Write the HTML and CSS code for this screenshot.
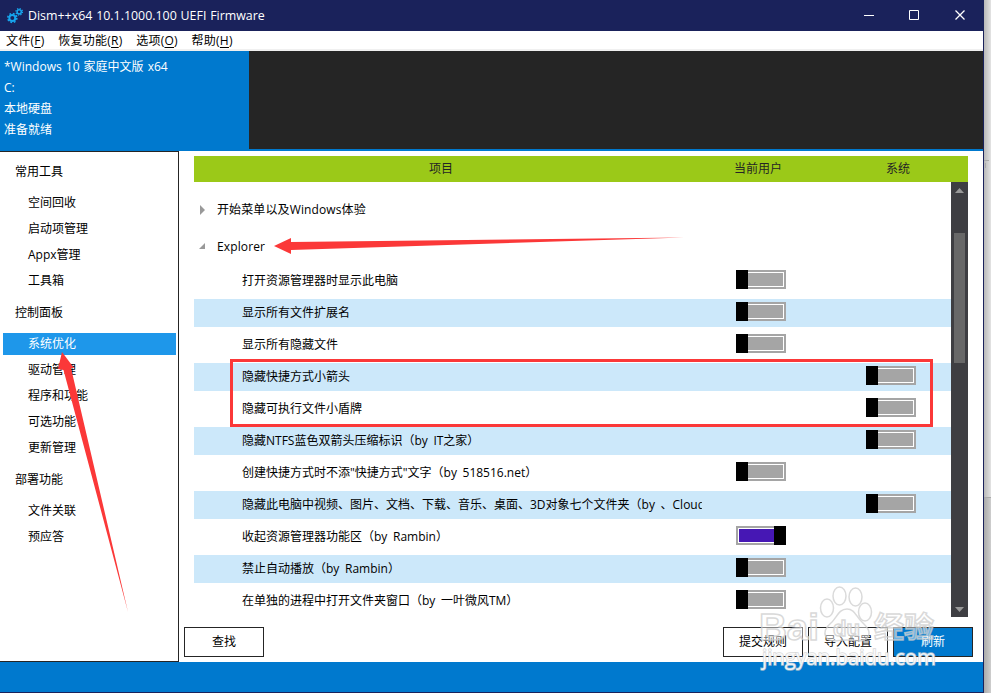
FILE: index.html
```
<!DOCTYPE html>
<html lang="zh-CN">
<head>
  <meta charset="UTF-8">
  <title>Dism++</title>
  <link rel="stylesheet" href="styles.css">
</head>
<body>
  <div class="window">
    <header class="titlebar">
      <svg class="logo" width="18" height="18" viewBox="0 0 18 18" fill="none" stroke="#16a5ee">
        <circle cx="6.300" cy="11" r="3" stroke-width="2"/>
        <circle cx="6.300" cy="11" r="4.500" stroke-width="1.600" stroke-dasharray="1.767 1.767"/>
        <circle cx="13.200" cy="4.800" r="2.100" stroke-width="1.500"/>
        <circle cx="13.200" cy="4.800" r="3.300" stroke-width="1.200" stroke-dasharray="1.296 1.296"/>
      </svg>
      <span class="title">Dism++x64 10.1.1000.100 UEFI Firmware</span>
      <svg class="controls" width="120" height="31" viewBox="0 0 120 31" fill="none" stroke="#fff">
        <path d="M1 15.5h10M46.500 10.500h9v9h-9z"/>
        <path d="M92.500 10.500l9 9M101.500 10.500l-9 9" stroke-width="1.300"/>
      </svg>
    </header>

    <nav class="menu">
      <span>文件(<u>F</u>)</span>
      <span>恢复功能(<u>R</u>)</span>
      <span>选项(<u>O</u>)</span>
      <span>帮助(<u>H</u>)</span>
    </nav>

    <section class="systems">
      <div class="system">
        <div>*Windows 10 家庭中文版 x64</div>
        <div>C:</div>
        <div>本地硬盘</div>
        <div>准备就绪</div>
      </div>
    </section>

    <div class="main">
      <aside class="sidebar">
        <h3>常用工具</h3>
        <ul>
          <li>空间回收</li>
          <li>启动项管理</li>
          <li>Appx管理</li>
          <li>工具箱</li>
        </ul>
        <h3>控制面板</h3>
        <ul>
          <li class="active">系统优化</li>
          <li>驱动管理</li>
          <li>程序和功能</li>
          <li>可选功能</li>
          <li>更新管理</li>
        </ul>
        <h3>部署功能</h3>
        <ul>
          <li>文件关联</li>
          <li>预应答</li>
        </ul>
      </aside>

      <section class="content">
        <div class="head">
          <span>项目</span>
          <span>当前用户</span>
          <span>系统</span>
        </div>
        <div class="scroller">
          <div class="list">
            <div class="group">
              <svg width="10" height="10"><path d="M3 0l5 5-5 5z" fill="#999"/></svg>
              开始菜单以及Windows体验
            </div>
            <div class="group open">
              <svg width="10" height="10"><path d="M8 1v6H2z" fill="#999"/></svg>
              Explorer
            </div>
            <div class="row"><span class="name">打开资源管理器时显示此电脑</span><i class="switch user"></i></div>
            <div class="row"><span class="name">显示所有文件扩展名</span><i class="switch user"></i></div>
            <div class="row"><span class="name">显示所有隐藏文件</span><i class="switch user"></i></div>
            <div class="row"><span class="name">隐藏快捷方式小箭头</span><i class="switch system-wide"></i></div>
            <div class="row"><span class="name">隐藏可执行文件小盾牌</span><i class="switch system-wide"></i></div>
            <div class="row"><span class="name">隐藏NTFS蓝色双箭头压缩标识（by IT之家）</span><i class="switch system-wide"></i></div>
            <div class="row"><span class="name">创建快捷方式时不添"快捷方式"文字（by 518516.net）</span><i class="switch user"></i></div>
            <div class="row"><span class="name">隐藏此电脑中视频、图片、文档、下载、音乐、桌面、3D对象七个文件夹（by 、Cloud</span><i class="switch system-wide"></i></div>
            <div class="row"><span class="name">收起资源管理器功能区（by Rambin）</span><i class="switch user on"></i></div>
            <div class="row"><span class="name">禁止自动播放（by Rambin）</span><i class="switch user"></i></div>
            <div class="row"><span class="name">在单独的进程中打开文件夹窗口（by 一叶微风TM）</span><i class="switch user"></i></div>
          </div>
          <div class="scrollbar">
            <svg width="17" height="17"><path d="M4 11h9L8.500 6z" fill="#999"/></svg>
            <div class="thumb"></div>
            <svg class="down" width="17" height="17"><path d="M4 7h9l-4.500 5z" fill="#999"/></svg>
          </div>
        </div>
        <div class="actions">
          <button class="find">查找</button>
          <button>提交规则</button>
          <button>导入配置</button>
          <button class="primary">刷新</button>
        </div>
      </section>
    </div>
    <footer class="statusbar"></footer>
  </div>
  <div class="desktop">
    <div class="behind"></div>
  </div>

  <!-- red marks and watermark on top of the window -->
  <svg class="marks" width="991" height="693" viewBox="0 0 991 693">
    <path d="M984 160.500h5M985.500 163v5" stroke="#aaa" fill="none"/>
    <rect x="231.500" y="360.500" width="700" height="65" fill="none" stroke="#fb3838" stroke-width="3"/>
    <path d="M274 246l17-8v4L684 237.500 291 250v4z" fill="#fb3838"/>
    <path d="M62 352l12 16h-3L128 612 63.500 370 58 369z" fill="#fb3838"/>
    <g class="watermark">
      <text class="brand" x="759" y="640" textLength="60" lengthAdjust="spacingAndGlyphs">Bai</text>
      <ellipse cx="827" cy="608" rx="6.500" ry="9"/>
      <ellipse cx="839.500" cy="596" rx="6.500" ry="9"/>
      <ellipse cx="855.500" cy="597" rx="6.500" ry="9"/>
      <ellipse cx="865" cy="612" rx="6.500" ry="9"/>
      <path d="M847 609c-8 0-10 8-15 13-6 5-9 10-6 15 3 6 11 3 21 3s18 3 21-3-1-10-6-15c-6-5-7-13-15-13z"/>
      <text class="du" x="833" y="636" textLength="27" lengthAdjust="spacingAndGlyphs">du</text>
      <text class="brand-cn" x="874" y="638" textLength="60" lengthAdjust="spacingAndGlyphs">经验</text>
      <text class="url" x="762" y="665" textLength="174" lengthAdjust="spacingAndGlyphs">jingyan.baidu.com</text>
    </g>
  </svg>
</body>
</html>
```

FILE: styles.css
```
* {
  box-sizing: border-box;
}
body {
  margin: 0;
  display: flex;
  height: 693px;
  overflow: hidden;
  background: #fff;
  color: #000;
  font: 12px/20px "Open Sans", "Noto Sans CJK SC", sans-serif;
  word-spacing: 1px;
}
.window {
  width: 984px;
  height: 693px;
  display: flex;
  flex-direction: column;
  border-right: 1px solid #1a225b;
  border-bottom: 1px solid #1a225b;
}
.desktop {
  flex: 1;
  display: flex;
  background: linear-gradient(to right, #b9b9b9, #e3e3e3);
}
.behind {
  flex: 1;
  height: 196px;
  margin-top: auto;
  border-top: 1px solid #aaa;
  background: linear-gradient(to right, #aaa, #cecece);
}
.titlebar {
  height: 31px;
  display: flex;
  align-items: center;
  padding-left: 6px;
  background: #1a225b;
  color: #fff;
}
.title {
  margin-left: 4px;
  font-size: 12.4px;
  word-spacing: 0.6px;
}
.controls {
  margin-left: auto;
}
.menu {
  height: 20px;
  display: flex;
  gap: 13.7px;
  padding-left: 6px;
  border-bottom: 2px solid #f0f0f0;
  line-height: 19px;
  letter-spacing: 0.25px;
}
.menu u {
  text-underline-offset: 2px;
}
.systems {
  height: 100px;
  background: #252525;
  border-bottom: 2px solid #0079ce;
}
.system {
  width: 249px;
  height: 98px;
  padding: 5px 4px;
  background: #0079ce;
  color: #fff;
  line-height: 21px;
}
.main {
  height: 511px;
  display: flex;
}
.sidebar {
  width: 179px;
  border: 1px solid #252525;
  border-left: none;
  padding: 5px 2px 0 3px;
}
.sidebar h3 {
  margin: 0;
  height: 30px;
  padding: 5px 0 0 12px;
  font-size: 12px;
  font-weight: normal;
}
.sidebar ul {
  margin: 0 0 6px;
  padding: 5px 0 0;
  list-style: none;
}
.sidebar li {
  height: 22px;
  margin-bottom: 4px;
  padding-left: 25px;
  line-height: 22px;
}
.sidebar .active {
  background: #1e97ea;
  color: #fff;
}
.content {
  flex: 1;
  padding: 5px 10px 0 5px;
}
.head {
  width: 774px;
  height: 26px;
  margin-left: 10px;
  display: grid;
  grid-template-columns: 494px 140px 140px;
  text-align: center;
  line-height: 25px;
  background: #9bc918;
  color: #252525;
}
.scroller {
  width: 774px;
  height: 435px;
  margin-left: 10px;
  display: flex;
}
.list {
  width: 757px;
  padding-top: 9px;
}
.group {
  height: 37px;
  display: flex;
  align-items: center;
  gap: 10px;
  padding-left: 3px;
  letter-spacing: 0.12px;
}
.row {
  height: 28px;
  margin-bottom: 4px;
  display: grid;
  grid-template-columns: 460px 82px 130px;
  padding-left: 48px;
  line-height: 28px;
  word-spacing: 2.5px;
}
.group.open + .row {
  margin-top: 2px;
}
.row:nth-child(even) {
  background: #cce8fa;
}
.name {
  overflow: hidden;
  white-space: nowrap;
}
.switch {
  width: 50px;
  height: 19px;
  margin-top: 3px;
  display: flex;
  background: #a5a5a5;
  border: 2px solid #a5a5a5;
  outline: 1px solid #fff;
  outline-offset: -3px;
}
.switch::before {
  content: "";
  width: 12px;
  height: 19px;
  margin: -2px 0 0 -2px;
  /* keeps the thumb above the outline */
  position: relative;
  z-index: 1;
  background: #000;
}
.user {
  grid-column: 2;
  margin-left: 34px;
}
.system-wide {
  grid-column: 3;
  margin-left: 82px;
}
.switch.on {
  background: #4617b4;
}
.switch.on::before {
  margin: -2px -2px 0 auto;
}
.scrollbar {
  width: 17px;
  display: flex;
  flex-direction: column;
  background: #3e3e42;
}
.thumb {
  width: 11px;
  height: 130px;
  margin: 34px 3px 0;
  background: #686868;
}
.down {
  margin-top: auto;
}
.actions {
  display: flex;
  gap: 5px;
  padding-top: 10px;
}
button {
  width: 80px;
  height: 30px;
  padding: 0;
  border: 1px solid #252525;
  background: #fff;
  color: #000;
  font: inherit;
}
.find {
  margin-right: auto;
}
.primary {
  background: #0079ce;
  color: #fff;
}
.statusbar {
  height: 30px;
  background: #0079ce;
}
.marks {
  position: absolute;
  top: 0;
  left: 0;
}
.watermark {
  fill: rgba(255, 255, 255, 0.45);
  stroke: rgba(205, 205, 205, 0.75);
  stroke-width: 1.5px;
  font-family: "Liberation Sans", "Noto Sans CJK SC", sans-serif;
}
.brand {
  font-size: 37px;
  font-weight: bold;
}
.brand-cn {
  font-size: 29px;
  font-weight: bold;
}
.du {
  font-size: 22px;
  font-weight: bold;
}
.url {
  fill: rgba(255, 255, 255, 0.85);
  paint-order: stroke;
  font-family: "Open Sans", sans-serif;
  font-size: 21px;
}
```
